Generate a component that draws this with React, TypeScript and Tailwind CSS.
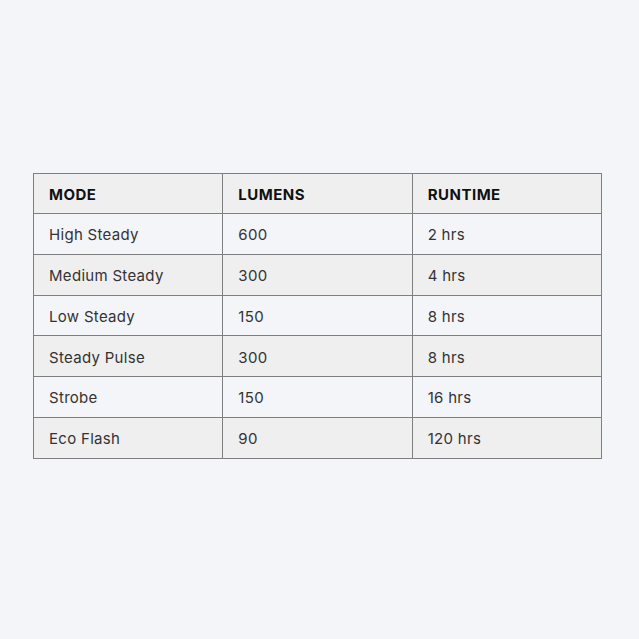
import React from "react";

interface Row {
  mode: string;
  lumens: string;
  runtime: string;
}

const rows: Row[] = [
  { mode: "High Steady", lumens: "600", runtime: "2 hrs" },
  { mode: "Medium Steady", lumens: "300", runtime: "4 hrs" },
  { mode: "Low Steady", lumens: "150", runtime: "8 hrs" },
  { mode: "Steady Pulse", lumens: "300", runtime: "8 hrs" },
  { mode: "Strobe", lumens: "150", runtime: "16 hrs" },
  { mode: "Eco Flash", lumens: "90", runtime: "120 hrs" },
];

const App: React.FC = () => {
  return (
    <div
      className="min-h-[639px] w-full bg-[#f4f5f9] pt-[173px] pl-[33px]"
      style={{ fontFamily: "Inter, 'Noto Sans', sans-serif" }}
    >
      <table className="w-[569px] table-fixed border-collapse text-[15px] text-[#333]">
        <thead>
          <tr className="bg-[#efefef]">
            <th className="h-[40px] border border-[#7f7f7f] px-[15px] pt-[3px] text-left font-bold tracking-[0.5px] text-[#111]">
              MODE
            </th>
            <th className="h-[40px] border border-[#7f7f7f] px-[15px] pt-[3px] text-left font-bold tracking-[0.5px] text-[#111]">
              LUMENS
            </th>
            <th className="h-[40px] border border-[#7f7f7f] px-[15px] pt-[3px] text-left font-bold tracking-[0.5px] text-[#111]">
              RUNTIME
            </th>
          </tr>
        </thead>
        <tbody>
          {rows.map((row, i) => (
            <tr key={row.mode} className={i % 2 === 1 ? "bg-[#efefef]" : "bg-[#f4f5f9]"}>
              <td className="h-[40.8px] border border-[#7f7f7f] px-[15px] pt-[3px] tracking-[0.3px]">{row.mode}</td>
              <td className="h-[40.8px] border border-[#7f7f7f] px-[15px] pt-[3px] tracking-[0.3px]">{row.lumens}</td>
              <td className="h-[40.8px] border border-[#7f7f7f] px-[15px] pt-[3px] tracking-[0.3px]">{row.runtime}</td>
            </tr>
          ))}
        </tbody>
      </table>
    </div>
  );
};

export default App;
